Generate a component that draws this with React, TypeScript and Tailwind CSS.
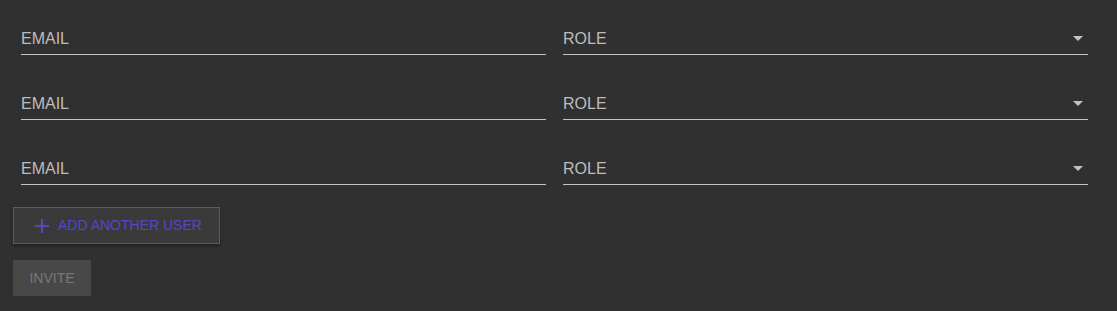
const rows = [0, 1, 2]

function Field({ label, select = false }: { label: string; select?: boolean }) {
  return (
    <div className="relative flex h-[33px] w-[525px] items-end border-b border-[#c4c4c4] pb-[6px]">
      <span className="text-[16px] leading-[18px] text-[#bdbdbd]">{label}</span>
      {select && (
        <svg
          className="absolute right-[5px] top-[14px]"
          width="10"
          height="5"
          viewBox="0 0 10 5"
        >
          <path d="M0 0 L10 0 L5 5 Z" fill="#c4c4c4" />
        </svg>
      )}
    </div>
  )
}

export default function App() {
  return (
    <div
      className="h-[311px] w-full bg-[#303030] px-[13px] pt-[22px]"
      style={{ fontFamily: '"Liberation Sans", Arial, sans-serif' }}
    >
      <div className="flex flex-col gap-[32px] pl-[8px]">
        {rows.map((r) => (
          <div key={r} className="flex gap-[17px]">
            <Field label="EMAIL" />
            <Field label="ROLE" select />
          </div>
        ))}
      </div>

      <button className="mt-[22px] flex h-[37px] w-[207px] items-center gap-[8px] border border-[#5548d6] bg-[#3a3a3a] pl-[20px] text-[14px] text-[#5247cc] shadow-[0_2px_3px_rgba(0,0,0,0.35)]">
        <svg width="16" height="16" viewBox="0 0 16 16">
          <path d="M8 1 V15 M1 8 H15" stroke="#5a4fd8" strokeWidth="1.6" />
        </svg>
        ADD ANOTHER USER
      </button>

      <button className="mt-[16px] flex h-[36px] w-[78px] items-center justify-center bg-[#484848] text-[14px] text-[#787878]">
        INVITE
      </button>
    </div>
  )
}
